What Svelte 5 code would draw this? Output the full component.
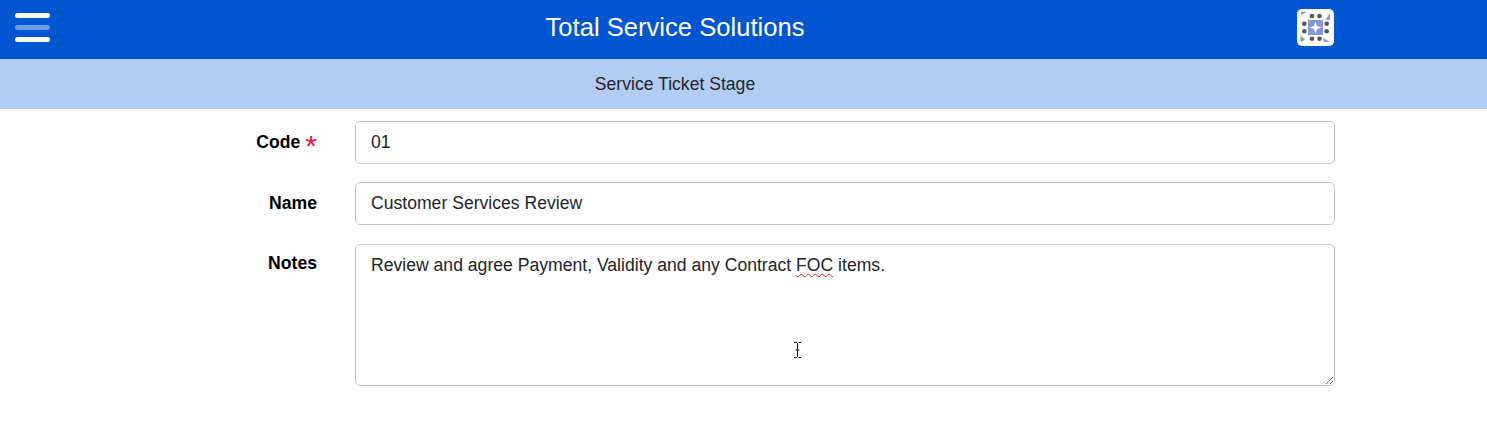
<script lang="ts">
	const menuBars = ["bar", "bar dim", "bar"];
	const topDots = [15, 22.5];
	const sideDots = [14.7, 22.3];
</script>

<div class="page">
	<header class="topbar">
		<div class="menu" aria-label="Menu">
			{#each menuBars as bar}
				<span class={bar}></span>
			{/each}
		</div>
		<h1>Total Service Solutions</h1>
		<svg class="logo" width="37" height="37" viewBox="0 0 37 37">
			<rect width="37" height="37" rx="5" fill="#fff" />
			<rect x="11" y="11" width="15" height="15" fill="#8796dd" />
			<path d="M18.5 12.5 L20 17 L24.5 18.5 L20 20 L18.5 24.5 L17 20 L12.5 18.5 L17 17 Z" fill="#fff" />
			{#each topDots as x}
				<circle cx={x} cy="7" r="2.3" fill="#55555f" />
				<circle cx={x} cy="29.7" r="2.3" fill="#55555f" />
			{/each}
			{#each sideDots as y}
				<circle cx="7.3" cy={y} r="2.3" fill="#55555f" />
				<circle cx="29.7" cy={y} r="2.3" fill="#55555f" />
			{/each}
			<path d="M4 3 H10 L4 6 Z" fill="#8796dd" />
			<path d="M33 4 V11 L28.5 11 Z" fill="#8796dd" />
			<path d="M3.5 26 L8 31 L3.5 33 Z" fill="#8796dd" />
			<path d="M26 29 L33 33 H27 Z" fill="#8796dd" />
		</svg>
	</header>

	<div class="subbar">Service Ticket Stage</div>

	<form class="form">
		<div class="row">
			<label for="code" class="with-mark">Code <span class="mark">*</span></label>
			<input id="code" value="01" />
		</div>
		<div class="row">
			<label for="name">Name</label>
			<input id="name" value="Customer Services Review" />
		</div>
		<div class="row notes">
			<span class="label">Notes</span>
			<div class="textarea" role="textbox" aria-label="Notes">
				Review and agree Payment, Validity and any Contract <span class="misspelt">FOC</span> items.
			</div>
			<svg class="ibeam" width="7" height="16" viewBox="0 0 7 16">
				<path d="M0 .5 H2.5 L3.5 1.5 L4.5 .5 H7 M3.5 1.5 V14.5 M0 15.5 H2.5 L3.5 14.5 L4.5 15.5 H7 M1.5 8 H5.5" fill="none" stroke="#111" stroke-width="1" />
			</svg>
		</div>
	</form>
</div>

<style>
	:global(body) {
		background: #fff;
	}
	.page {
		font-family: "Liberation Sans", Arial, sans-serif;
		color: #212529;
	}
	.topbar {
		height: 59px;
		background: #0055d0;
		padding-right: 137px;
		display: grid;
		grid-template-columns: 1fr auto 1fr;
		align-items: center;
	}
	.menu {
		display: flex;
		flex-direction: column;
		gap: 7px;
		width: 35px;
		margin: 0 0 4px 15px;
	}
	.bar {
		height: 5px;
		border-radius: 3px;
		background: #fff;
	}
	.bar.dim {
		background: #6f9be3;
	}
	h1 {
		margin: 0 0 4px;
		font-size: 25.6px;
		font-weight: 400;
		color: #fff;
	}
	.logo {
		justify-self: end;
		margin: 0 16px 5px 0;
	}
	.subbar {
		height: 50px;
		background: #b3cdf2;
		padding-right: 137px;
		display: flex;
		align-items: center;
		justify-content: center;
		font-size: 17.6px;
	}
	.form {
		display: flex;
		flex-direction: column;
		gap: 18px;
		padding: 12px 152px 0 0;
	}
	.row {
		position: relative;
		display: grid;
		grid-template-columns: 317px 980px;
		column-gap: 38px;
		align-items: center;
		margin-top: 0;
	}
	.row.notes {
		align-items: start;
		margin-top: 1px;
	}
	label,
	.label {
		text-align: right;
		font-size: 17.6px;
		font-weight: 700;
		color: #000;
	}
	.label {
		padding-top: 9px;
	}
	.with-mark {
		padding-right: 0;
		display: flex;
		justify-content: flex-end;
		align-items: center;
		gap: 5px;
	}
	.mark {
		font-size: 30px;
		font-weight: 400;
		line-height: 1;
		color: #e8154b;
		height: 22px;
		margin-top: -1px;
	}
	input,
	.textarea {
		box-sizing: border-box;
		width: 100%;
		border: 1px solid #c4c4c4;
		border-radius: 5px;
		background: #fff;
		padding: 0 15px;
		font-family: inherit;
		font-size: 17.6px;
		color: #212529;
	}
	input {
		height: 43px;
		outline: none;
	}
	.textarea {
		height: 142px;
		padding-top: 8px;
		line-height: 24px;
		resize: vertical;
		overflow: auto;
	}
	.misspelt {
		text-decoration: underline wavy #e02020 1px;
		text-underline-offset: 2px;
	}
	.ibeam {
		position: absolute;
		left: 794px;
		top: 98px;
	}
</style>
